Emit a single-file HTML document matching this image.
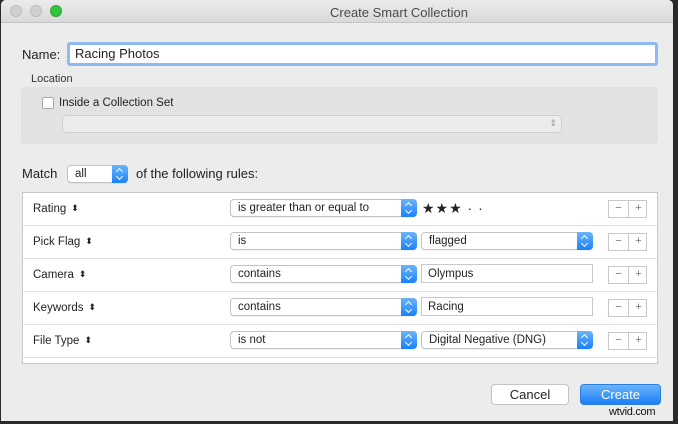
<!DOCTYPE html>
<html><head><meta charset="utf-8"><style>
*{box-sizing:border-box;margin:0;padding:0}
body{width:678px;height:424px;background:#2a2a28;position:relative;overflow:hidden;font-family:"Liberation Sans",sans-serif;font-size:12px;color:#222}
.win{position:absolute;left:1px;top:0;width:672px;height:421px;background:#ececec;border-radius:5px 5px 0 0;overflow:hidden}
.tb{position:absolute;left:0;top:0;width:100%;height:23px;background:linear-gradient(#ebebeb,#d9d9d9);border-bottom:1px solid #c4c4c4}
.dot{position:absolute;top:5px;width:12px;height:12px;border-radius:50%;background:#d0d0d0;border:1px solid #bdbdbd}
.title{position:absolute;left:0;width:100%;top:5px;text-align:center;font-size:13px;color:#4a4a4a;padding-left:124px}
.a{position:absolute}
.pop{position:absolute;height:18px;background:#fff;border:1px solid #c3c3c3;border-radius:4px;font-size:11.5px;line-height:17px;padding-left:7px;box-shadow:0 1px 0 rgba(0,0,0,.05)}
.pop .ar{position:absolute;right:-1px;top:-1px;width:16px;height:18px;background:linear-gradient(#6cb3fa,#1a82fb);border-radius:0 4px 4px 0}
.pop .ar:before{content:"";position:absolute;left:5px;top:4px;width:4px;height:4px;border-left:1.3px solid #fff;border-top:1.3px solid #fff;transform:rotate(45deg)}
.pop .ar:after{content:"";position:absolute;left:5px;top:9px;width:4px;height:4px;border-right:1.3px solid #fff;border-bottom:1.3px solid #fff;transform:rotate(45deg)}
.tf{position:absolute;height:19px;background:#fff;border:1px solid #c8c8c8;font-size:11.5px;line-height:18px;padding-left:6px}
.row{position:absolute;left:0;width:100%;height:33px;border-bottom:1px solid #e2e2e2}
.lbl{position:absolute;left:10px;top:10px;font-size:11.5px}
.lbl b{font-weight:normal;font-size:9px;margin-left:5px;vertical-align:1px}
.pm{position:absolute;left:585px;top:7px;width:39px;height:18px;border:1px solid #c8c8c8;background:#fff;font-size:11px;color:#777}
.pm span{position:absolute;top:1px;width:19px;text-align:center}
.pm i{position:absolute;left:19px;top:0;width:1px;height:16px;background:#c8c8c8}
.btn{position:absolute;height:21px;border-radius:4px;text-align:center;font-size:13px;line-height:19px}
</style></head><body>
<div class="win">
<div class="tb">
<div class="dot" style="left:9px"></div>
<div class="dot" style="left:29px"></div>
<div class="dot" style="left:49px;background:#35c43f;border-color:#2aa632"></div>
<div class="title">Create Smart Collection</div>
</div>
<div class="a" style="left:21px;top:47px;font-size:13px">Name:</div>
<div class="a" style="left:66px;top:42px;width:591px;height:24px;border:3px solid #8fbaf0;border-radius:3px;background:#fff;font-size:13px;line-height:18px;padding-left:5px">Racing Photos</div>
<div class="a" style="left:30px;top:73px;font-size:11px;color:#333">Location</div>
<div class="a" style="left:20px;top:87px;width:637px;height:57px;background:#e2e2e2;border-radius:4px"></div>
<div class="a" style="left:41px;top:97px;width:12px;height:12px;border:1px solid #a8a8a8;border-radius:2px;background:#fff"></div>
<div class="a" style="left:58px;top:97px;font-size:11.5px">Inside a Collection Set</div>
<div class="a" style="left:61px;top:115px;width:500px;height:18px;border:1px solid #d0d0d0;border-radius:4px;background:#ececec;font-size:9px;color:#999;text-align:right;padding-right:4px;line-height:15px">⇕</div>
<div class="a" style="left:21px;top:166px;font-size:13px">Match</div>
<div class="pop" style="left:66px;top:165px;width:61px">all<div class="ar"></div></div>
<div class="a" style="left:135px;top:166px;font-size:13px">of the following rules:</div>
<div class="a" style="left:21px;top:192px;width:636px;height:172px;background:#fff;border:1px solid #c8c8c8">
<div class="row" style="top:0"><div class="lbl">Rating<b>⬍</b></div><div class="pop" style="left:207px;top:6px;width:187px">is greater than or equal to<div class="ar"></div></div><div class="a" style="left:399px;top:7px;font-size:14px;letter-spacing:1px">★★★ · ·</div><div class="pm"><span style="left:0">−</span><i></i><span style="left:20px">+</span></div></div>
<div class="row" style="top:33px"><div class="lbl">Pick Flag<b>⬍</b></div><div class="pop" style="left:207px;top:6px;width:187px">is<div class="ar"></div></div><div class="pop" style="left:398px;top:6px;width:172px">flagged<div class="ar"></div></div><div class="pm"><span style="left:0">−</span><i></i><span style="left:20px">+</span></div></div>
<div class="row" style="top:66px"><div class="lbl">Camera<b>⬍</b></div><div class="pop" style="left:207px;top:6px;width:187px">contains<div class="ar"></div></div><div class="tf" style="left:398px;top:5px;width:172px">Olympus</div><div class="pm"><span style="left:0">−</span><i></i><span style="left:20px">+</span></div></div>
<div class="row" style="top:99px"><div class="lbl">Keywords<b>⬍</b></div><div class="pop" style="left:207px;top:6px;width:187px">contains<div class="ar"></div></div><div class="tf" style="left:398px;top:5px;width:172px">Racing</div><div class="pm"><span style="left:0">−</span><i></i><span style="left:20px">+</span></div></div>
<div class="row" style="top:132px"><div class="lbl">File Type<b>⬍</b></div><div class="pop" style="left:207px;top:6px;width:187px">is not<div class="ar"></div></div><div class="pop" style="left:398px;top:6px;width:172px">Digital Negative (DNG)<div class="ar"></div></div><div class="pm"><span style="left:0">−</span><i></i><span style="left:20px">+</span></div></div>
</div>
<div class="btn" style="left:490px;top:384px;width:78px;background:#fff;border:1px solid #c4c4c4">Cancel</div>
<div class="btn" style="left:579px;top:384px;width:81px;background:linear-gradient(#6ab4fb,#1b7ff5);color:#fff;border:1px solid #2a7fe0">Create</div>
<div class="a" style="left:608px;top:406px;font-size:11px;color:#111;letter-spacing:-.3px">wtvid.com</div>
</div>
</body></html>
